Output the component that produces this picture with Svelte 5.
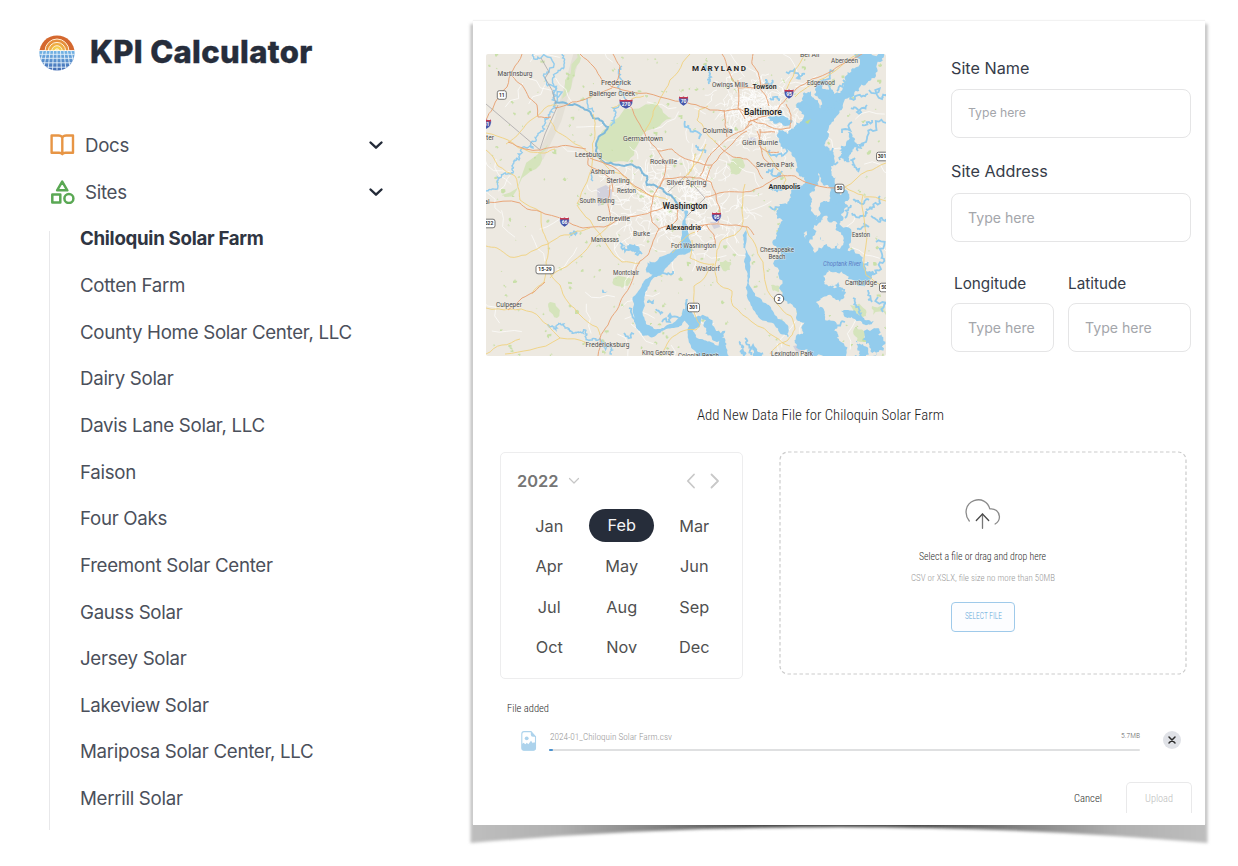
<script>
  const sites = [
    'Chiloquin Solar Farm', 'Cotten Farm', 'County Home Solar Center, LLC', 'Dairy Solar',
    'Davis Lane Solar, LLC', 'Faison', 'Four Oaks', 'Freemont Solar Center', 'Gauss Solar',
    'Jersey Solar', 'Lakeview Solar', 'Mariposa Solar Center, LLC', 'Merrill Solar'
  ];
  const months = ['Jan', 'Feb', 'Mar', 'Apr', 'May', 'Jun', 'Jul', 'Aug', 'Sep', 'Oct', 'Nov', 'Dec'];

  // Seeded generator so the map is the same on every load
  let seed = 11;
  const rnd = () => {
    seed = (seed * 16807) % 2147483647;
    return seed / 2147483647;
  };

  // Midpoint displacement turns a coarse outline into a natural one
  function rough(points, amount, depth, closed) {
    let p = points;
    for (let d = 0; d < depth; d++) {
      const out = [];
      const n = p.length;
      for (let i = 0; i < (closed ? n : n - 1); i++) {
        const a = p[i];
        const b = p[(i + 1) % n];
        const dx = b[0] - a[0];
        const dy = b[1] - a[1];
        const k = (rnd() - 0.5) * amount;
        out.push(a, [(a[0] + b[0]) / 2 - dy * k, (a[1] + b[1]) / 2 + dx * k]);
      }
      if (!closed) out.push(p[n - 1]);
      p = out;
    }
    return 'M' + p.map((q) => q[0].toFixed(1) + ' ' + q[1].toFixed(1)).join('L') + (closed ? 'Z' : '');
  }
  const parse = (s) => s.split(' ').map((c) => c.split(',').map(Number));
  const area = (s, amount = 0.9, depth = 3) => rough(parse(s), amount, depth, true);
  const line = (s, amount = 0.25, depth = 2) => rough(parse(s), amount, depth, false);
  const shore = (s, amount = 0.6, depth = 3) => rough(parse(s).map(([x, y]) => [486 + x / 3, 54 + y / 3]), amount, depth, true);

  const water = [
    shore('1105,-6 1110,40 1080,65 1070,100 1045,120 1030,105 1010,105 1015,75 990,85 985,120 1000,135 1005,170 985,135 975,112 955,115 950,140 930,160 955,185 930,205 915,225 905,240 880,225 875,250 890,285 925,310 930,350 955,370 945,395 930,390 925,400 915,430 880,450 870,480 890,500 870,540 860,560 885,590 880,650 885,710 905,750 930,790 955,805 950,840 925,860 930,880 985,912 1080,912 1060,860 1045,830 1040,800 1020,800 1015,770 990,745 1010,730 1050,738 1080,715 1040,700 1015,690 1012,665 1050,655 1085,675 1150,680 1165,660 1140,650 1120,600 1085,590 1095,550 1060,510 1065,480 1085,460 1060,440 1065,410 1050,370 1035,350 1045,330 1030,290 1020,260 1035,210 1060,170 1090,130 1120,110 1145,85 1170,65 1190,20 1195,-6', 0.62, 3),
    shore('595,470 606,470 604,520 615,580 625,590 605,598 575,605 555,625 530,660 505,670 485,700 475,730 470,780 480,810 505,825 540,815 570,800 595,770 600,735 606,735 610,770 625,790 650,785 640,820 620,830 630,850 670,862 720,880 735,912 640,912 615,880 605,850 610,815 595,800 575,820 530,830 500,850 470,845 450,820 440,770 440,730 465,700 480,675 500,662 480,650 485,625 505,630 545,600 590,582 590,520', 0.3, 3),
    shore('645,785 680,805 718,830 722,870 705,900 700,860 675,845 655,820', 0.7, 3),
    shore('780,528 786,600 792,650 794,700 830,745 860,770 900,810 907,850 880,835 845,805 810,780 792,745 779,700 785,660 778,600 773,560', 0.4, 3),
    shore('845,190 870,185 900,190 920,200 905,215 880,205 850,200', 0.7, 2),
    shore('1085,235 1105,260 1135,270 1100,285 1080,305 1090,325 1065,310 1060,290 1080,270', 0.8, 3),
    shore('1065,770 1100,770 1130,790 1165,800 1145,812 1110,800 1080,790', 0.6, 3),
    shore('1160,825 1180,825 1192,850 1192,890 1160,912 1150,880 1140,870', 0.8, 3),
    shore('1110,860 1130,870 1140,912 1105,912 1120,890', 0.9, 3),
    shore('405,575 430,570 460,580 465,595 435,590', 0.8, 3),
    shore('490,622 520,625 530,640 505,655 480,655', 0.5, 2),
    shore('1050,408 1085,412 1075,445 1045,450', 0.8, 3),
    shore('252,535 274,532 270,547 252,547', 0.8, 2),
    shore('350,705 365,712 360,716 348,712', 0.8, 2),
    shore('760,860 775,880 770,906 762,890', 0.8, 3),
    shore('800,880 830,895 835,912 815,912', 0.8, 3)
  ];
  const creeks = [
    '765,80 768,86 772,80', '706,65 711,77 709,84', '685,121 690,129 699,139', '696,145 705,153',
    '800,109 809,106 814,110', '770,98 779,101', '786,72 797,78 805,74', '829,97 828,79 834,70', '822,111 834,104 838,96',
    '843,80 837,91', '869,90 882,99 886,96', '886,123 873,131 866,142 853,146', '847,93 855,99 868,94',
    '840,160 848,149 858,151', '833,148 838,162', '842,133 852,122', '770,150 779,154 786,148', '766,172 775,176 782,171',
    '770,188 777,192 784,189', '770,207 781,208', '851,205 845,218', '852,213 862,216 866,211', '857,229 864,223 869,226',
    '871,216 880,222 886,219', '876,242 882,254 880,267 870,273', '853,298 859,309 858,317', '828,336 838,337', '836,325 845,322',
    '868,290 872,302', '878,297 883,312', '745,338 753,345 751,355', '629,308 635,322', '624,333 634,334',
    '647,302 653,304', '662,322 670,314 684,309', '663,273 673,271', '656,309 663,313',
    '620,243 625,251 634,248 642,254', '867,105 857,112 851,108', '872,120 862,125', '858,172 852,165 855,158',
    '869,200 860,203 853,200', '850,262 862,268 868,262', '845,290 838,284 828,287', '842,280 835,272', '880,196 874,207 866,209'
  ].map((s) => line(s, 1, 3));
  const islands = [
    area('818,173 821,182 826,185 830,195 828,202 824,201 820,206 817,220 813,213 811,203 810,193 815,187', 0.6, 3),
    area('823,217 829,222 835,221 838,231 844,242 840,249 837,243 832,249 829,239 824,245 820,237 816,252 813,251 815,235 818,224', 0.8, 3),
    area('806,231 807,233 806,239 804,236', 0.7, 2),
    area('827,275 837,273 850,281 846,288 833,286 828,284', 0.9, 3)
  ];
  const rivers = [
    line('562,54 561,69 556,90 555,103 552,112 545,119 537,136 533,148 519,160 513,164 507,174 497,181 486,191', 0.9, 4),
    line('533,54 541,58 549,72 545,78 551,85 555,103', 1.1, 3),
    line('548,324 557,328 565,327 574,333 585,330 590,340 603,345 612,354', 1, 4),
    line('622,66 620,78 624,94 613,108 614,118 611,126', 0.8, 3),
    line('587,98 588,108 594,112', 0.7, 2),
    line('591,174 593,181', 0.7, 2)
  ];
  const potomac = line('555,103 570,105 587,110 593,118 602,121 608,127 597,141 596,151 605,163 627,165 640,168 647,176 647,185 663,189 670,195 677,204 683,211', 0.35, 3);

  const park = [
    area('607,128 616,119 625,108 643,106 655,102 662,109 672,118 662,123 652,129 637,146 628,162 610,163 602,159 597,148 599,139', 0.3, 2),
    area('723,163 736,158 744,163 741,171 730,174', 0.6, 2),
    area('613,279 625,277 632,280 628,286 622,288 614,285', 0.4, 2),
    area('576,48 581,58 575,75 569,92 562,99 565,80', 0.5, 2),
    area('548,144 540,165 522,178 505,197 502,195 523,172', 0.5, 2),
    area('771,285 780,287 779,292 773,291', 0.5, 2),
    area('550,302 558,308 557,318 549,311', 0.5, 2),
    area('872,306 883,306 886,315 873,315', 0.6, 2),
    area('850,305 866,310 868,318 856,318', 0.6, 2),
    area('856,327 868,332 862,342 855,336', 0.7, 2),
    area('720,262 731,262 730,270 722,269', 0.6, 2)
  ];
  const specks = Array.from({ length: 330 }, () => {
    const x = 486 + rnd() * 400;
    const y = 54 + rnd() * 302;
    const r = 0.5 + rnd() * 1.7;
    return area(`${x - r},${y} ${x},${y - r} ${x + r},${y} ${x},${y + r}`, 1.3, 1);
  });

  // Dense street grids around the two cities, sparse lanes elsewhere
  const lanes = [
    ...Array.from({ length: 75 }, () => [486 + rnd() * 400, 54 + rnd() * 302, 30]),
    ...Array.from({ length: 210 }, () => [672 + (rnd() + rnd() - 1) * 80, 198 + (rnd() + rnd() - 1) * 60, 15]),
    ...Array.from({ length: 170 }, () => [754 + (rnd() + rnd() - 1) * 50, 110 + (rnd() + rnd() - 1) * 42, 13])
  ].map(([x, y, l]) => {
    const a = rnd() * 6.28;
    return line(`${x},${y} ${x + Math.cos(a) * l},${y + Math.sin(a) * l}`, 0.5, 2);
  });

  const yellow = [
    '486,133 508,140 530,152 545,153 555,149', '486,150 498,166 515,176 519,190 520,200 541,212 543,232 548,242 546,262 544,282 532,294',
    '486,246 497,248 510,257 526,255 548,244 560,236 577,231 590,228', '486,308 510,309 532,312 548,325 560,338 588,344',
    '550,273 560,285 568,302 580,315 597,327 600,335', '550,278 572,262 591,243 611,222', '506,144 520,132 534,118 548,106 557,105',
    '550,120 555,130 570,140 590,154', '593,114 595,133 593,155 587,182 577,204', '690,54 678,72 665,90 658,104 651,120 645,132',
    '708,106 699,110 697,120 705,129 716,143', '706,144 700,158 688,175', '806,54 795,70 784,94', '858,54 835,71 815,84 795,97',
    '765,147 775,165 786,180 783,190', '845,187 867,171 886,163', '845,187 863,195 864,218 864,258 866,275 886,286', '864,197 886,201',
    '743,225 735,235 722,240 717,250 715,269 717,282 732,291 733,306 752,322 775,337 790,346', '746,226 755,244 763,262 766,285 777,304 791,316 795,329 788,340 779,344 770,354',
    '714,264 705,277 694,286 694,312 700,324 696,330 680,332 667,344 660,356', '714,264 695,260 690,258 692,240', '627,180 652,196 668,200',
    '594,153 610,170 630,180', '577,205 590,220 608,247 622,262 640,263', '672,253 680,242 695,232', '505,354 530,350 560,338',
    '683,180 693,167 695,154', '745,184 742,210 742,225', '612,108 629,101 644,96', '486,354 502,345 520,339'
  ].map((s) => line(s, 0.18));
  const orange = [
    '522,54 513,70 507,87 493,108 486,120', '512,76 522,85 529,98 537,105 538,117 551,117', '555,108 572,102 590,97 612,88', '580,54 594,67 602,80 612,87 618,79 620,66 613,54',
    '612,87 632,92 660,97 691,104 710,110 740,109 752,117', '625,99 637,120 646,137 658,151 666,163 664,177 660,187', '508,142 525,149 541,150 553,147 570,146 586,149',
    '587,153 588,165 602,172 612,180 613,192', '590,158 606,164 627,178 645,192 653,197', '753,54 752,64 758,72 760,88 766,96 769,106',
    '738,80 738,108 745,119', '722,54 728,70 738,88 753,88 768,84', '880,49 850,60 832,71 812,79 796,89 786,99 776,112 766,116', '747,131 733,143 720,155 708,175 704,188', '752,124 742,131 728,138 716,149 708,158 700,176',
    '757,131 761,148 764,159 778,170', '750,120 765,124 778,129 790,128 791,115 786,104', '724,110 725,125 727,137', '658,151 672,149 682,157 695,162 712,165', '716,143 723,150 733,157 747,159 758,170 763,179',
    '705,197 719,193 740,192 752,191 766,184 780,176 795,176 805,182 835,188', '653,198 657,189 664,179 680,177 700,178 711,182 716,195 720,210 718,223',
    '653,198 651,207 652,222 659,229 668,226', '659,229 652,245 648,255 640,261 634,275 624,295 617,310 608,325 600,338 598,356', '486,202 520,203 527,209 545,214 570,223 583,228 604,227 629,217 653,211',
    '508,310 522,298 534,292 545,282', '653,211 668,205 678,210 677,220 668,228', '697,232 704,225 713,224 736,225 748,227 754,235', '706,224 714,235 715,246', '668,226 690,227 704,225',
    '745,129 750,121 758,119', '766,116 758,118 748,122', '760,129 760,147 768,152 779,152', '760,132 775,132', '610,185 608,205 610,220'
  ].map((s) => line(s, 0.14));

  const places = [
    ['Martinsburg', 515, 75.5, 35], ['Frederick', 616, 85.2, 30], ['Ballenger Creek', 612, 95.5, 46], ['Owings Mills', 730, 86.5, 36],
    ['Aberdeen', 844.5, 63, 27], ['Edgewood', 821, 84.5, 28], ['Bel Air', 810, 57, 20], ['Columbia', 717.5, 132.5, 30],
    ['Glen Burnie', 760, 145, 36], ['Germantown', 643, 141, 40], ['Leesburg', 588.5, 156.5, 27], ['Ashburn', 602.5, 173.5, 24],
    ['Rockville', 663.5, 163.5, 27], ['Sterling', 618, 183.3, 23], ['Reston', 626.5, 193.3, 19], ['Silver Spring', 686.5, 184.5, 40],
    ['South Riding', 597, 203, 35], ['Severna Park', 775, 167, 38], ['Centreville', 613.5, 221, 33], ['Burke', 641.5, 236, 17],
    ['Manassas', 605, 242, 28], ['Fort Washington', 693.5, 248, 45], ['Chesapeake', 777, 252, 34], ['Beach', 777, 259, 17],
    ['Waldorf', 708, 271, 24], ['Montclair', 626, 275, 26], ['Culpeper', 509, 307, 26], ['Fredericksburg', 607.5, 347, 44],
    ['King George', 658, 355, 32], ['Colonial Beach', 698.5, 358, 41], ['Lexington Park', 792, 356, 42], ['Easton', 861, 236.5, 18],
    ['Cambridge', 861, 284.5, 32], ['ter', 490, 140, 8], ['al', 487, 203.5, 5]
  ];
  const cities = [['Towson', 764.5, 88.5, 24, 7.2], ['Baltimore', 763, 115.2, 38, 8.2], ['Annapolis', 784.5, 188.5, 32, 7.2], ['Washington', 685, 208.7, 45, 8.4], ['Alexandria', 683.5, 229.5, 35, 7.2]];
  const interstates = [[626, 104, 13, '270'], [683.5, 101, 9, '70'], [789, 94, 9, '95'], [564.5, 222, 9, '66'], [716.5, 217, 9, '95'], [486.5, 124, 9, '81']];
  const highways = [[501.8, 95, 9, '11'], [545, 269.5, 18, '15-29'], [489, 223.5, 12, '522'], [693.5, 307.5, 12, '301'], [839.5, 188.5, 9, '50'], [882, 156.5, 11, '301'], [884, 287.5, 9, '50']];
</script>

{#snippet narrow(text, width, size, color)}
  <svg class="narrow" {width} height={size * 1.3} aria-label={text}>
    <text x="0" y={size} font-size={size} fill={color} textLength={width} lengthAdjust="spacingAndGlyphs">{text}</text>
  </svg>
{/snippet}

{#snippet toggle()}
  <svg class="toggle" width="16" height="12" viewBox="0 0 16 12"><path d="M2.500 3.500 8 8.700l5.500-5.200" /></svg>
{/snippet}

<div class="page">
  <aside>
    <header>
      <svg width="36" height="36" viewBox="0 0 36 36">
        <defs>
          <clipPath id="disc"><circle cx="18" cy="18" r="17.6" /></clipPath>
          <linearGradient id="panel" x2="0" y2="1"><stop stop-color="#73b5e6" /><stop offset="1" stop-color="#3e67b0" /></linearGradient>
        </defs>
        <g clip-path="url(#disc)">
          <path fill="#d4682f" d="M0 0h36v15.4H0z" />
          <g stroke="#fff0d8" stroke-width="1">
            <circle cx="18" cy="16" r="12" fill="#e6903d" />
            <circle cx="18" cy="16" r="8.6" fill="#eeac42" />
            <circle cx="18" cy="16" r="5.3" fill="#f4cd4c" />
            <circle cx="18" cy="16" r="2.2" fill="#fbe384" />
          </g>
          <path fill="#fff" d="M0 15.2h36V36H0z" />
          <path fill="url(#panel)" d="M0 16h36v20H0z" />
          <path stroke="#e4f2fc" stroke-width=".9" fill="none" d="M0 19.3h36M0 23.3h36M0 27.8h36M0 32.2h36M18 16v20M14.5 16 13.5 36M21.5 16l1 20M11 16 9 36M25 16l2 20M7.5 16 4.5 36M28.500 16l3 20M4 16 0 34M32 16l4 18" />
        </g>
      </svg>
      <h1>KPI Calculator</h1>
    </header>
    <nav>
      <div class="group">
        <svg width="25" height="24" viewBox="0 0 25 24" fill="none" stroke="#e79545" stroke-width="2.4" stroke-linejoin="round" stroke-linecap="round">
          <path d="M12.300 4.500Q11.300 2.500 8.500 2.500H1.600v17.200h7.500q2.400 0 3.200 1.500.8-1.500 3.200-1.500H23V2.500h-6.700q-3 0-4 2zM12.300 4.500v16.500" />
        </svg>
        <span>Docs</span>{@render toggle()}
      </div>
      <div class="group">
        <svg width="25" height="24" viewBox="0 0 25 24" fill="none" stroke="#5aa854" stroke-width="2.500" stroke-linejoin="round">
          <path d="M12.200 1.600 17.300 10.300H7.100zM2.300 14.600h8v8h-8z" /><circle cx="18.900" cy="18.500" r="4.500" />
        </svg>
        <span>Sites</span>{@render toggle()}
      </div>
      <ul>
        {#each sites as site, i}<li class:active={i === 0}>{site}</li>{/each}
      </ul>
    </nav>
  </aside>

  <main>
    <svg class="shadow" width="752" height="856" viewBox="463 10 752 856">
      <defs>
        <linearGradient id="fade">
          <stop stop-color="#bebebe" /><stop offset=".12" stop-color="#b0b0b0" /><stop offset=".26" stop-color="#808080" /><stop offset=".4" stop-color="#404040" />
          <stop offset=".6" stop-color="#404040" /><stop offset=".74" stop-color="#808080" /><stop offset=".88" stop-color="#b0b0b0" /><stop offset="1" stop-color="#bebebe" />
        </linearGradient>
        <filter id="soft" x="-5%" y="-5%" width="110%" height="110%"><feGaussianBlur stdDeviation="1.7" /></filter>
      </defs>
      <path d="M470.500 24H1207.500V843Q839 811 470.500 843Z" fill="url(#fade)" filter="url(#soft)" />
    </svg>

    <section class="card">
      <div class="site">
        <svg class="map" width="400" height="302" viewBox="486 54 400 302">
          <path fill="#ede9e1" d="M486 54h400v302H486z" />
          <path d="M577 54 558 120 540 158" stroke="#e4e0d6" stroke-width="7" fill="none" />
          <path d="M597 189l9-4 6 5-1 12-13 4zM748 138l7-1 1 4-6 2zM793 346l10-2 3 5-9 4zM710 222l9-1 1 6-6 2z" fill="#d2d1dc" />
          {#each park as d}<path {d} fill="#d5e4bc" />{/each}
          {#each specks as d}<path {d} fill="#bcdc95" opacity=".75" />{/each}
          {#each lanes as d}<path {d} class="lane" />{/each}
          {#each water as d}<path {d} fill="#93cced" />{/each}
          {#each creeks as d}<path {d} class="creek" />{/each}
          {#each rivers as d}<path {d} class="river" />{/each}
          <path d={potomac} class="potomac" />
          {#each islands as d}<path {d} fill="#ede9e1" />{/each}
          <path d="M805 122l6-3-3 5z" fill="#bcdc95" />
          <path d="M486 104l54 46M558 105l-13 29-5 15M668 192l17-16 20 22-18 18M541 58l8 14-4 6 7 12 4 14" stroke="#aaa7a8" stroke-width=".8" fill="none" />
          {#each yellow as d}<path {d} class="road minor" />{/each}
          {#each orange as d}<path {d} class="road major" />{/each}

          {#each interstates as [x, y, w, n]}
            <g transform="translate({x} {y})">
              <path d="M{-w / 2} -4.500Q{-w / 4} -3.500 0 -4.500 {w / 4} -3.500 {w / 2} -4.500Q{w / 2 + 1.500} 2.500 0 5 {-w / 2 - 1.500} 2.500 {-w / 2} -4.500Z" fill="#4656a8" stroke="#fff" stroke-width=".5" />
              <path d="M{-w / 2} -4.500Q{-w / 4} -3.500 0 -4.500 {w / 4} -3.500 {w / 2} -4.500V-2.500H{-w / 2}Z" fill="#c8384d" />
              <text y="2.400" font-size="5" font-weight="700" fill="#fff" text-anchor="middle">{n}</text>
            </g>
          {/each}
          {#each highways as [x, y, w, n]}
            <rect x={x - w / 2} y={y - 4.3} width={w} height="8.600" rx="2" fill="#fff" stroke="#555" stroke-width=".8" />
            <text {x} y={y + 1.9} font-size="5" font-weight="700" fill="#333" text-anchor="middle">{n}</text>
          {/each}
          <circle cx="779" cy="299" r="4.700" fill="#fff" stroke="#444" stroke-width=".8" />
          <text x="779" y="301" font-size="5" font-weight="700" fill="#333" text-anchor="middle">2</text>

          {#each places as [name, x, y, w]}
            <text x={x - w / 2} {y} class="place" textLength={w} lengthAdjust="spacingAndGlyphs">{name}</text>
          {/each}
          {#each cities as [name, x, y, w, s]}
            <text x={x - w / 2} {y} class="place city" style:font-size="{s}px" textLength={w} lengthAdjust="spacingAndGlyphs">{name}</text>
          {/each}
          <text x="692" y="70.500" class="place city state" textLength="54">MARYLAND</text>
          <text x="823" y="265.500" class="place bay" textLength="38" lengthAdjust="spacingAndGlyphs">Choptank River</text>
        </svg>

        <form>
          <label for="name">Site Name</label>
          <input id="name" class="small" placeholder="Type here" />
          <label for="address">Site Address</label>
          <input id="address" placeholder="Type here" />
          <div class="coords">
            <div class="lon"><label for="lon">Longitude</label><input id="lon" placeholder="Type here" /></div>
            <div class="lat"><label for="lat">Latitude</label><input id="lat" placeholder="Type here" /></div>
          </div>
        </form>
      </div>

      <div class="heading">{@render narrow('Add New Data File for Chiloquin Solar Farm', 247, 15.5, '#1c1c1c')}</div>

      <div class="data">
        <div class="calendar">
          <div class="year">
            <b>2022</b>
            <svg width="12" height="8" viewBox="0 0 12 8"><path d="M1.500 1.500 6 6l4.500-4.500" stroke="#c6c6c6" stroke-width="1.200" /></svg>
            <svg class="prev" width="10" height="16" viewBox="0 0 10 16"><path d="M8 1.500 1.800 8 8 14.500" stroke="#c8c8c8" stroke-width="1.800" /></svg>
            <svg width="10" height="16" viewBox="0 0 10 16"><path d="M1.500 1.500 8 8l-6.500 6.500" stroke="#c8c8c8" stroke-width="1.800" /></svg>
          </div>
          <div class="months">
            {#each months as m}<span class:picked={m === 'Feb'}>{m}</span>{/each}
          </div>
        </div>

        <div class="drop">
          <svg class="outline" width="408" height="224"><rect x="1" y="1" width="406" height="222" rx="8" fill="none" stroke="#cbcbcb" stroke-width="1.200" stroke-dasharray="3.500 2.500" /></svg>
          <svg width="38" height="32" viewBox="0 0 38 32" fill="none" stroke-linecap="round" stroke-linejoin="round">
            <path d="M5.300 23C-.5 15.700 1.800 5.500 10 2.600c7-2.500 14 1 15.800 8.300 5.200-.8 9.300 2.700 9.600 7.500.2 3.200-1.600 6-4.300 7.600" stroke="#8b8b8b" stroke-width="1.300" />
            <path d="M18.500 16v14.300" stroke="#777" stroke-width="1.300" /><path d="m12.300 22.500 6.200-6.500 6.200 6.500" stroke="#4a4a4a" stroke-width="1.300" />
          </svg>
          <div class="prompt">{@render narrow('Select a file or drag and drop here', 127, 10.2, '#2a2a2a')}</div>
          <div class="hint">{@render narrow('CSV or XSLX, file size no more than 50MB', 144, 9.7, '#999')}</div>
          <button class="select">{@render narrow('SELECT FILE', 37, 8.4, '#5ba6d8')}</button>
        </div>
      </div>

      <div class="added">{@render narrow('File added', 42, 10.7, '#2a2a2a')}</div>
      <div class="file">
        <svg width="16" height="20" viewBox="0 0 16 20">
          <path d="M3 .6h7l4.500 5V17q0 2.200-2.200 2.200H3Q.8 19.200.8 17V3Q.8.600 3 .6z" fill="#fff" stroke="#add3ec" stroke-width="1.100" />
          <path d="M9.800.6v3q0 2.200 2.200 2.200h3z" fill="#add3ec" />
          <circle cx="5.700" cy="7.300" r="1.900" fill="#add3ec" />
          <path d="m.8 13.300 1.500-1.600 2.200 1.600 1.300-1.500 1.500 1.500 2.700-3.600 1.900 2.600 1.200-1.200 1.500 1.700v4.400q0 2.200-2.200 2.200H3q-2.200 0-2.200-2.200z" fill="#add3ec" />
        </svg>
        <div class="progress">
          <div class="names">{@render narrow('2024-01_Chiloquin Solar Farm.csv', 122, 9.7, '#959595')}{@render narrow('5.7MB', 19, 8, '#666')}</div>
          <div class="bar"><i></i></div>
        </div>
        <button class="close" aria-label="Remove"><svg width="18" height="18" viewBox="0 0 18 18"><path d="m6 6 6 6m0-6-6 6" stroke="#2d2d2d" stroke-width="1.500" stroke-linecap="round" /></svg></button>
      </div>
      <footer>
        <div class="cancel">{@render narrow('Cancel', 28, 10.7, '#2a2a2a')}</div>
        <button class="upload">{@render narrow('Upload', 28, 10.7, '#bbb')}</button>
      </footer>
    </section>
  </main>
</div>

<style>
  :global(body) { background: #fff; }
  * { box-sizing: border-box; }
  .page { display: flex; width: 1238px; height: 866px; overflow: hidden; background: #fff; font-family: Inter, sans-serif; }
  aside { width: 473px; padding: 35px 0 0 39px; }
  header { display: flex; align-items: center; gap: 15px; height: 36px; }
  h1 { margin: 0; font-size: 31px; line-height: 34px; margin-top: -2px; font-weight: 800; letter-spacing: .35px; color: #262d3b; white-space: nowrap; -webkit-text-stroke: .4px #262d3b; }
  nav { padding: 51px 0 0 11px; width: 345px; }
  .group { display: flex; align-items: center; height: 46.7px; font-size: 18.7px; color: #4b505b; }
  .group span { flex: 1; margin-left: 10px; letter-spacing: -.3px; }
  .toggle path { fill: none; stroke: #232a38; stroke-width: 2.4; stroke-linecap: round; stroke-linejoin: round; }
  ul { list-style: none; margin: 16px 0 0 -1px; padding: 0 0 0 30px; border-left: 1.500px solid #e8e8ea; height: 599px; }
  li { height: 46.65px; line-height: 46.65px; font-size: 18.7px; color: #4b505b; letter-spacing: -.3px; white-space: nowrap; position: relative; top: -15px; }
  .active { font-weight: 700; color: #2f3542; }
  main { position: relative; padding-top: 21px; }
  .shadow { position: absolute; left: -10px; top: 10px; }
  .card { position: relative; width: 732px; height: 804px; background: #fff; padding-top: 33px; box-shadow: 0 -1px 1px #f2f2f2; }
  svg { display: block; flex: none; }
  .site { display: flex; padding-left: 13px; gap: 65px; height: 302px; }
  .map { border-radius: 2px; font-family: Roboto, sans-serif; }
  .lane { fill: none; stroke: #fff; stroke-width: .8; stroke-opacity: .85; }
  .creek { fill: none; stroke: #93cced; stroke-width: 1.800; }
  .river { fill: none; stroke: #93cced; stroke-width: 1.400; }
  .potomac { fill: none; stroke: #7fb9da; stroke-width: 2; }
  .road { fill: none; stroke-linejoin: round; }
  .minor { stroke: #f1d17e; stroke-width: .9; }
  .major { stroke: #e8a67a; stroke-width: 1; }
  .place { font-size: 6.900px; font-weight: 400; fill: #4c4c4c; stroke: #f4f1eb; stroke-width: 1px; paint-order: stroke; stroke-opacity: .7; }
  .city { font-weight: 600; fill: #262626; }
  .state { font-size: 8px; font-weight: 700; }
  .bay { fill: #5b7cc4; font-style: italic; stroke: none; }
  form { width: 240px; padding-top: 4px; }
  label { display: block; font-size: 16.200px; line-height: 20px; color: #363c49; margin-bottom: 11px; }
  input { display: block; width: 100%; height: 49px; border: 1px solid #e5e5e6; border-radius: 8px; padding: 0 16px 1px; font-family: inherit; font-size: 14.100px; color: #333; background: #fff; margin-bottom: 23px; }
  input::placeholder { color: #a4a6ab; opacity: 1; }
  .small { font-size: 12.200px; padding-bottom: 2px; }
  #address { margin-top: 12px; margin-bottom: 0; }
  .coords { display: flex; gap: 14px; padding-top: 32px; }
  .coords label { font-size: 15.300px; margin-bottom: 9px; }
  .lon { width: 103px; }
  .lon label { padding-left: 3px; }
  .lat { width: 123px; }
  .narrow { font-family: "Liberation Sans Narrow", "Roboto Condensed", Roboto, sans-serif; font-weight: 300; overflow: visible; }
  .heading { display: flex; justify-content: center; align-items: center; height: 24px; margin: 46px 37px 0 0; }
  .data { display: flex; align-items: flex-start; gap: 36px; margin: 25px 0 0 27px; }
  .calendar { width: 243px; height: 227px; margin-top: 1px; border: 1px solid #ededee; border-radius: 5px; padding: 13px 12px; }
  .year { display: flex; align-items: center; height: 30px; padding: 0 10px 0 4px; color: #757575; font-size: 16.400px; }
  .year b { font-weight: 600; margin-right: 10px; }
  .year path { fill: none; stroke-linecap: round; stroke-linejoin: round; }
  .prev { margin: 0 14px 0 auto; }
  .months { display: grid; grid-template-columns: repeat(3, 72.5px); grid-auto-rows: 40.5px; margin-top: 9px; }
  .months span { align-self: center; justify-self: center; width: 65px; height: 33px; line-height: 34px; border-radius: 17px; text-align: center; font-size: 16.300px; color: #505050; }
  .months .picked { background: #262d3a; color: #f4f4f6; line-height: 33px; }
  .drop { position: relative; display: flex; flex-direction: column; align-items: center; width: 408px; height: 224px; padding-top: 47px; }
  .outline { position: absolute; inset: 0; }
  .prompt { margin: 20px 2px 0 0; }
  .hint { margin-top: 8px; }
  button { display: flex; align-items: center; justify-content: center; padding: 0; font: inherit; }
  .select { width: 64px; height: 30px; margin-top: 18px; background: #fcfdff; border: 1px solid #9fcaea; border-radius: 4px; }
  .added { margin: 22px 0 0 34px; }
  .file { display: flex; align-items: flex-start; margin: 16px 0 0 48px; height: 20px; }
  .progress { width: 591px; margin: 0 23px 0 12px; }
  .names { display: flex; justify-content: space-between; height: 18px; padding-left: 1px; }
  .names .narrow { margin-top: -1px; }
  .bar { height: 2px; border-radius: 1px; background: #dfe0e1; }
  .bar i { display: block; width: 4px; height: 2px; border-radius: 1px; background: #4a92cf; }
  .close { width: 18px; height: 18px; border: 0; border-radius: 50%; background: #e0e2e7; }
  footer { display: flex; align-items: center; justify-content: flex-end; gap: 24px; margin: 31px 13px 0 0; height: 31px; }
  .cancel { padding-top: 2px; }
  .upload { width: 66px; height: 31px; background: none; border: 1px solid #e9e9ea; border-bottom: 0; border-radius: 5px 5px 0 0; }
</style>
